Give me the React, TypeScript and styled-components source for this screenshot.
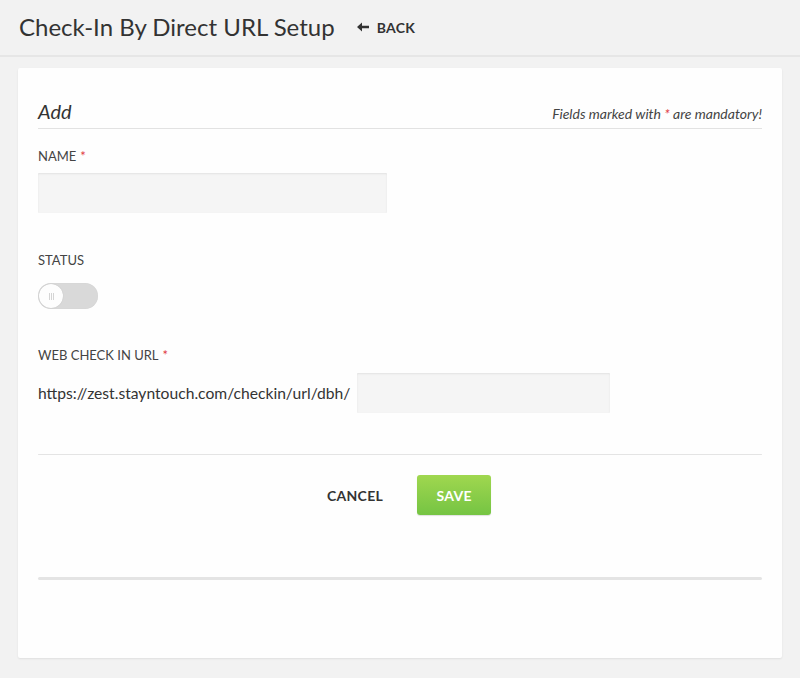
import styled, { createGlobalStyle } from "styled-components"

const GlobalStyle = createGlobalStyle`
  html, body {
    margin: 0;
    padding: 0;
    background: #f2f2f2;
    font-family: Lato, "Noto Sans", sans-serif;
    color: #333;
  }
  * { box-sizing: border-box; }
`

const Page = styled.div`
  width: 800px;
  min-height: 678px;
  background: #f2f2f2;
`

const Header = styled.header`
  display: flex;
  align-items: center;
  gap: 22px;
  height: 57px;
  padding: 0 19px 3px;
  border-bottom: 2px solid #e6e6e6;
`

const Title = styled.h1`
  margin: 0;
  font-size: 24px;
  font-weight: 400;
  color: #333;
`

const BackLink = styled.a`
  display: inline-flex;
  align-items: center;
  gap: 8px;
  font-size: 14px;
  font-weight: 700;
  color: #333;
  text-decoration: none;
  letter-spacing: 0.3px;
  margin-top: 2px;
`

const Card = styled.section`
  margin: 11px 18px 0;
  height: 590px;
  background: #fefefe;
  border-radius: 2px;
  box-shadow: 0 1px 2px rgba(0, 0, 0, 0.08);
  padding: 31px 20px 0;
`

const CardHead = styled.div`
  display: flex;
  align-items: baseline;
  justify-content: space-between;
  padding-bottom: 5px;
  border-bottom: 1px solid #e2e2e2;
`

const CardTitle = styled.h2`
  margin: 0;
  font-size: 20px;
  font-weight: 400;
  font-style: italic;
  color: #333;
`

const Note = styled.span`
  font-size: 14px;
  font-style: italic;
  color: #444;
`

const Star = styled.span<{ $tight?: boolean }>`
  color: #e0393e;
  margin-left: ${({ $tight }) => ($tight ? 0 : 4)}px;
`

const Field = styled.div<{ $top: number; $gap: number }>`
  display: flex;
  flex-direction: column;
  gap: ${({ $gap }) => $gap}px;
  margin-top: ${({ $top }) => $top}px;
`

const Label = styled.label`
  font-size: 13px;
  text-transform: uppercase;
  color: #444;
  line-height: 16px;
`

const TextInput = styled.input<{ $w: number }>`
  width: ${({ $w }) => $w}px;
  height: 40px;
  border: none;
  border-radius: 1px;
  background: #f5f5f5;
  box-shadow: inset 0 1px 2px rgba(0, 0, 0, 0.08);
  outline: none;
`

const Toggle = styled.div`
  position: relative;
  width: 60px;
  height: 26px;
  border-radius: 13px;
  background: #d9d9d9;
  box-shadow: inset 0 0 1px rgba(0, 0, 0, 0.1);
`

const Knob = styled.span`
  position: absolute;
  top: 1px;
  left: 1px;
  width: 24px;
  height: 24px;
  border-radius: 50%;
  background: #fdfdfd;
  box-shadow: 0 0 1px rgba(0, 0, 0, 0.2);
  display: flex;
  align-items: center;
  justify-content: center;
  gap: 1px;

  i {
    width: 1px;
    height: 7px;
    background: #d4d4d4;
  }
`

const UrlRow = styled.div`
  display: flex;
  align-items: center;
  gap: 7px;
`

const UrlPrefix = styled.span`
  font-size: 15.65px;
  color: #333;
`

const Divider = styled.hr<{ $thick?: boolean; $top?: number }>`
  margin: ${({ $top }) => $top ?? 0}px 0 0;
  border: none;
  height: ${({ $thick }) => ($thick ? 3 : 1)}px;
  background: #e4e4e4;
  border-radius: 2px;
`

const Actions = styled.div`
  display: flex;
  justify-content: center;
  align-items: center;
  gap: 34px;
  padding: 20px 0 62px 18px;
`

const CancelButton = styled.button`
  background: none;
  border: none;
  font-family: inherit;
  font-size: 14px;
  font-weight: 700;
  color: #333;
  letter-spacing: 0.3px;
  padding: 0;
`

const SaveButton = styled.button`
  width: 74px;
  height: 40px;
  border: none;
  border-radius: 3px;
  background: linear-gradient(#a0d74f, #75c443);
  box-shadow: 0 1px 1px rgba(0, 0, 0, 0.12);
  color: #fff;
  font-family: inherit;
  font-size: 14px;
  font-weight: 700;
  letter-spacing: 0.3px;
`

export default function App() {
  return (
    <Page>
      <GlobalStyle />
      <Header>
        <Title>Check-In By Direct URL Setup</Title>
        <BackLink href="#">
          <svg width="12" height="10" viewBox="0 0 12 10" aria-hidden="true">
            <path d="M0 5 L5 0.5 V3.8 H12 V6.2 H5 V9.5 Z" fill="#333" />
          </svg>
          BACK
        </BackLink>
      </Header>

      <Card>
        <CardHead>
          <CardTitle>Add</CardTitle>
          <Note>
            Fields marked with <Star $tight>*</Star> are mandatory!
          </Note>
        </CardHead>

        <Field $top={19} $gap={9}>
          <Label>
            Name<Star>*</Star>
          </Label>
          <TextInput $w={349} />
        </Field>

        <Field $top={39} $gap={15}>
          <Label>Status</Label>
          <Toggle>
            <Knob>
              <i />
              <i />
              <i />
            </Knob>
          </Toggle>
        </Field>

        <Field $top={38} $gap={10}>
          <Label>
            Web Check In URL<Star>*</Star>
          </Label>
          <UrlRow>
            <UrlPrefix>https://zest.stayntouch.com/checkin/url/dbh/</UrlPrefix>
            <TextInput $w={253} />
          </UrlRow>
        </Field>

        <Divider $top={41} />

        <Actions>
          <CancelButton>CANCEL</CancelButton>
          <SaveButton>SAVE</SaveButton>
        </Actions>

        <Divider $thick />
      </Card>
    </Page>
  )
}
